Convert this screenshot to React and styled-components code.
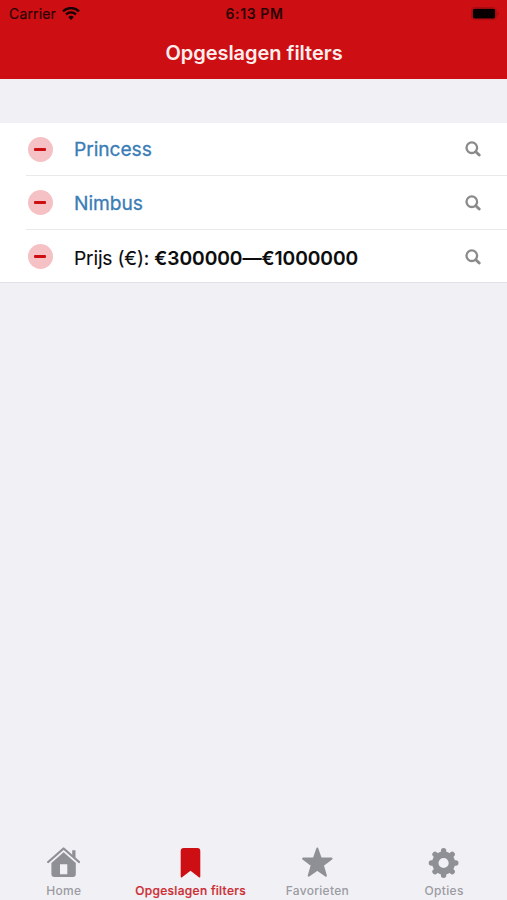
import React from "react";
import styled, { createGlobalStyle } from "styled-components";

const GlobalStyle = createGlobalStyle`
  *, *::before, *::after { box-sizing: border-box; }
  body { margin: 0; background: #f0f0f5; }
`;

const Screen = styled.div`
  display: flex;
  flex-direction: column;
  width: 100%;
  height: 900px;
  overflow: hidden;
  background: #f0f0f5;
  font-family: Inter, "Liberation Sans", sans-serif;
  color: #0c0c0c;
`;

const Header = styled.header`
  height: 79px;
  flex: none;
  background: #cd0f14;
`;

const StatusBar = styled.div`
  display: grid;
  grid-template-columns: 1fr auto 1fr;
  align-items: center;
  height: 27px;
  padding: 0 7px 0 9px;
  color: #2b0304;
`;

const Carrier = styled.div`
  display: flex;
  align-items: center;
  gap: 6px;
  font-size: 14px;
  line-height: 27px;
  letter-spacing: 0.15px;
  -webkit-text-stroke: 0.2px #2b0304;
`;

const Clock = styled.time`
  padding-top: 1px;
  font-size: 14px;
  font-weight: 600;
  line-height: 26px;
  letter-spacing: 0.6px;
`;

const Battery = styled.svg`
  display: block;
  justify-self: end;
`;

const Title = styled.h1`
  margin: 0;
  height: 52px;
  padding-left: 1px;
  text-align: center;
  font-size: 20px;
  font-weight: 600;
  line-height: 52px;
  letter-spacing: -0.03px;
  color: #fdeeee;
`;

const FilterList = styled.ul`
  flex: none;
  list-style: none;
  margin: 44px 0 0;
  padding: 0 0 0 26px;
  height: 160px;
  background: #fff;
  border-bottom: 1px solid #e2e2e6;
`;

const FilterRow = styled.li`
  display: flex;
  align-items: center;
  height: 54px;
  padding: 0 26px 2px 1.5px;

  & + & { box-shadow: 0 -1px 0 #e9e9ec; }
  &:nth-child(1) { height: 53px; padding-bottom: 1px; }
  &:nth-child(2) { padding-bottom: 1px; }
  &:nth-child(3) { padding-bottom: 1px; }
`;

const RemoveButton = styled.button`
  display: flex;
  align-items: center;
  justify-content: center;
  flex: none;
  width: 25px;
  height: 25px;
  padding: 0;
  border: 0;
  border-radius: 50%;
  background: #f5c1c5;

  &::before {
    content: "";
    width: 12px;
    height: 3px;
    border-radius: 1px;
    background: #cd0f14;
  }
`;

const FilterName = styled.span`
  flex: 1;
  margin-left: 21.5px;
  padding-top: ${({ $plain }) => ($plain ? "2px" : "0")};
  font-size: 19.2px;
  line-height: 24px;
  letter-spacing: ${({ $plain }) => ($plain ? "-0.18px" : "-0.05px")};
  white-space: nowrap;
  color: ${({ $plain }) => ($plain ? "#0c0c0c" : "#3b7db6")};
  -webkit-text-stroke: ${({ $plain }) => ($plain ? "0.1px #0c0c0c" : "0.3px #3b7db6")};
`;

const Range = styled.strong`
  font-weight: 600;
  letter-spacing: -0.06px;
`;

const SearchIcon = styled.svg`
  display: block;
  flex: none;
`;

const TabBar = styled.nav`
  display: grid;
  grid-template-columns: repeat(4, 1fr);
  height: 60px;
  margin-top: auto;
  flex: none;
`;

const Tab = styled.a`
  display: flex;
  flex-direction: column;
  align-items: center;
  padding-top: 6px;
  color: ${({ $active }) => ($active ? "#cd0f14" : "#8f9096")};

  svg { display: block; flex: none; }
`;

const TabLabel = styled.span`
  margin-top: 5px;
  padding-left: 1px;
  font-size: 12px;
  font-weight: 500;
  line-height: 16px;
  letter-spacing: ${({ $spacing }) => $spacing}px;
  white-space: nowrap;
  color: ${({ $active }) => ($active ? "#cc2c32" : "#9b9ba1")};
  -webkit-text-stroke: ${({ $active }) => ($active ? "0.2px #cc2c32" : "0")};
`;

const Wifi = () => (
  <svg width="18" height="14" viewBox="0 0 18 14" fill="none" stroke="#160102">
    <path d="M1 4.3a11.6 11.6 0 0 1 16 0" strokeWidth="2.4" />
    <path d="M4 7.4a7.3 7.3 0 0 1 10 0" strokeWidth="2.2" />
    <path d="M9 13 6.2 10.1a4 4 0 0 1 5.6 0Z" fill="#160102" stroke="none" />
  </svg>
);

const BatteryFull = () => (
  <Battery width="29" height="14" viewBox="0 0 29 14">
    <rect x="0.4" y="0.5" width="25" height="12.2" rx="3" fill="none" stroke="#ac0c10" />
    <rect x="1.8" y="1.7" width="22.4" height="9.8" rx="1.7" fill="#080000" />
    <path d="M26.6 4.5c1.8.8 1.8 3.4 0 4.2Z" fill="#a30b0f" />
  </Battery>
);

const Magnifier = () => (
  <SearchIcon width="16" height="16" viewBox="0 0 16 16" fill="none" stroke="#8a8a8a">
    <circle cx="6.8" cy="6.7" r="5.3" strokeWidth="2.3" />
    <path d="m10.8 10.7 3.4 3.3" strokeWidth="2.9" strokeLinecap="round" />
  </SearchIcon>
);

const HomeIcon = () => (
  <svg width="34" height="32" viewBox="0 0 34 32" fill="currentColor">
    <path d="M26.2 4.2h3.3v8l-3.3-3Z" />
    <path d="M2.2 16 17.6 2.5 33 16" fill="none" stroke="currentColor" strokeWidth="2.3" strokeLinecap="round" strokeLinejoin="round" />
    <path fillRule="evenodd" d="M17.6 6.2 29.8 17V28a3 3 0 0 1-3 3H8.4a3 3 0 0 1-3-3V17ZM14 18.3v10h7.3v-10Z" />
  </svg>
);

const BookmarkIcon = () => (
  <svg width="34" height="32" viewBox="0 0 34 32" fill="currentColor">
    <path d="M10.7 2h13.6a3 3 0 0 1 3 3v25.2q0 2.2-1.7.8L17.5 24.7 9.4 31q-1.7 1.4-1.7-.8V5a3 3 0 0 1 3-3Z" />
  </svg>
);

const StarIcon = () => (
  <svg width="34" height="32" viewBox="0 0 34 32" fill="currentColor" stroke="currentColor" strokeWidth="2" strokeLinejoin="round">
    <path d="m17.3 2.5 3.4 9.9 10.8.2-8.6 6.7 3 10.4-8.6-6-8.6 6 3-10.4-8.6-6.7 10.8-.2Z" />
  </svg>
);

const GearIcon = () => (
  <svg width="34" height="32" viewBox="0 0 34 32" fill="none" stroke="currentColor">
    <circle cx="16.6" cy="17" r="8.3" strokeWidth="6.4" />
    <path d="M16.6 6v-1.2M16.6 28v1.2M5.6 17h-1.2M27.6 17h1.2M8.8 9.2l-.8-.8M24.4 24.8l.8.8M8.8 24.8l-.8.8M24.4 9.2l.8-.8" strokeWidth="5.4" strokeLinecap="round" />
  </svg>
);

const filters = [
  { name: "Princess" },
  { name: "Nimbus" },
  { name: "Prijs (€): ", range: "€300000—€1000000" },
];

const tabs = [
  { label: "Home", Icon: HomeIcon, spacing: 0.35 },
  { label: "Opgeslagen filters", Icon: BookmarkIcon, active: true, spacing: 0.3 },
  { label: "Favorieten", Icon: StarIcon, spacing: 0.3 },
  { label: "Opties", Icon: GearIcon, spacing: 0.35 },
];

export default function App() {
  return (
    <Screen>
      <GlobalStyle />
      <Header>
        <StatusBar>
          <Carrier>Carrier <Wifi /></Carrier>
          <Clock>6:13 PM</Clock>
          <BatteryFull />
        </StatusBar>
        <Title>Opgeslagen filters</Title>
      </Header>
      <FilterList>
        {filters.map(({ name, range }) => (
          <FilterRow key={name}>
            <RemoveButton aria-label="Verwijder" />
            <FilterName $plain={Boolean(range)}>
              {name}
              {range && <Range>{range}</Range>}
            </FilterName>
            <Magnifier />
          </FilterRow>
        ))}
      </FilterList>
      <TabBar>
        {tabs.map(({ label, Icon, active, spacing }) => (
          <Tab key={label} $active={active}>
            <Icon />
            <TabLabel $active={active} $spacing={spacing}>{label}</TabLabel>
          </Tab>
        ))}
      </TabBar>
    </Screen>
  );
}
